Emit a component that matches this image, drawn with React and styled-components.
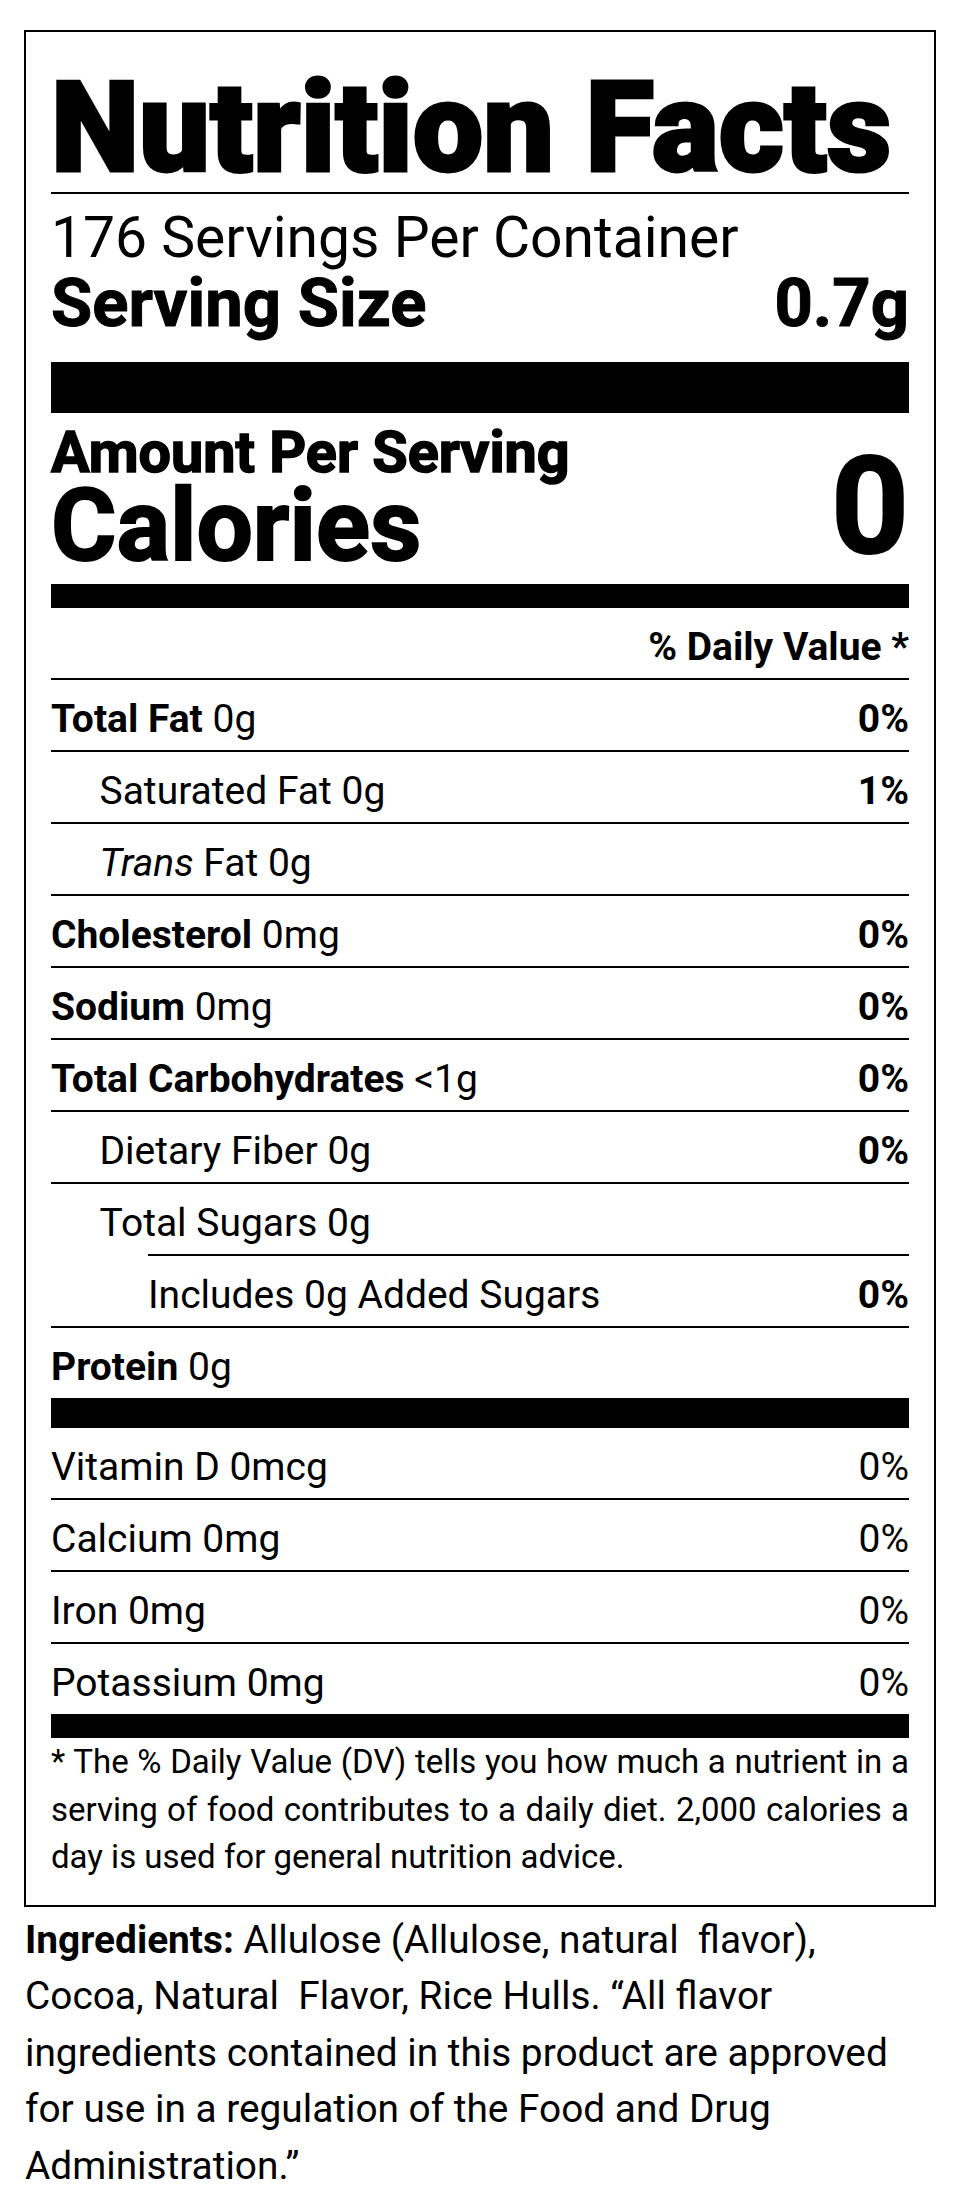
import React from 'react';
import styled, { createGlobalStyle } from 'styled-components';

const Global = createGlobalStyle`
  html, body { margin: 0; padding: 0; background: #fff; }
  body {
    font-family: Roboto, "Liberation Sans", Arial, sans-serif;
    color: #000;
    -webkit-font-smoothing: antialiased;
  }
`;

const Page = styled.main`
  width: 960px;
  box-sizing: border-box;
  padding: 30px 24px 20px;
`;

const Panel = styled.section`
  border: 2px solid #000;
  padding: 25px 25px 24px;
`;

const Title = styled.h1`
  margin: 8px 0 0;
  font-size: 125.5px;
  font-weight: 900;
  line-height: 127px;
  -webkit-text-stroke: 3px #000;
  border-bottom: 2px solid #000;
  white-space: nowrap;
`;

const Servings = styled.div`
  margin-top: 12px;
  font-size: 57px;
  line-height: 64px;
  font-weight: 400;
`;

const SizeRow = styled.div`
  display: flex;
  justify-content: space-between;
  font-size: 67px;
  line-height: 67px;
  font-weight: 700;
  -webkit-text-stroke: 1px #000;
  margin-bottom: 25px;
`;

const Bar = styled.div`
  height: ${(p) => p.$h}px;
  background: #000;
`;

const CalorieBlock = styled.div`
  display: flex;
  justify-content: space-between;
  align-items: flex-end;
  padding-top: 12px;
  margin-bottom: 14px;
`;

const CalorieLabels = styled.div`
  display: flex;
  flex-direction: column;
`;

const AmountLabel = styled.div`
  font-size: 57.5px;
  line-height: 56px;
  font-weight: 700;
  -webkit-text-stroke: 1.5px #000;
`;

const CaloriesLabel = styled.div`
  font-size: 100px;
  line-height: 89px;
  font-weight: 700;
  -webkit-text-stroke: 2px #000;
`;

const CaloriesValue = styled.div`
  font-size: 136px;
  line-height: 127px;
  font-weight: 700;
  -webkit-text-stroke: 2px #000;
`;

const Row = styled.div`
  display: flex;
  justify-content: ${(p) => (p.$end ? 'flex-end' : 'space-between')};
  align-items: baseline;
  padding: 17px 0 9px;
  font-size: 39px;
  line-height: 44px;
  border-bottom: ${(p) => (p.$noRule ? 'none' : '2px solid #000')};
`;

const Label = styled.span`
  padding-left: ${(p) => (p.$level || 0) * 48.5}px;
  white-space: nowrap;
`;

const Strong = styled.b`
  font-weight: 700;
`;

const Em = styled.i`
  font-style: italic;
`;

const Pct = styled.span`
  font-weight: ${(p) => (p.$light ? 400 : 700)};
`;

const Rule = styled.div`
  height: 2px;
  background: #000;
  margin-left: ${(p) => p.$inset || 0}px;
`;

const Footnote = styled.p`
  margin: 0;
  font-size: 33px;
  line-height: 47.5px;
  text-align: justify;
`;

const Ingredients = styled.p`
  margin: 5px 0 0 1px;
  font-size: 38.8px;
  line-height: 56.5px;
`;

const nutrients = [
  { bold: 'Total Fat', amt: '0g', pct: '0%' },
  { label: 'Saturated Fat 0g', level: 1, pct: '1%' },
  { trans: true, level: 1 },
  { bold: 'Cholesterol', amt: '0mg', pct: '0%' },
  { bold: 'Sodium', amt: '0mg', pct: '0%' },
  { bold: 'Total Carbohydrates', amt: '<1g', pct: '0%' },
  { label: 'Dietary Fiber 0g', level: 1, pct: '0%' },
];

const vitamins = [
  { label: 'Vitamin D 0mcg', pct: '0%' },
  { label: 'Calcium 0mg', pct: '0%' },
  { label: 'Iron 0mg', pct: '0%' },
  { label: 'Potassium 0mg', pct: '0%', last: true },
];

function NutrientLabel({ n }) {
  if (n.trans) {
    return (
      <Label $level={n.level}>
        <Em>Trans</Em> Fat 0g
      </Label>
    );
  }
  if (n.bold) {
    return (
      <Label $level={n.level}>
        <Strong>{n.bold}</Strong> {n.amt}
      </Label>
    );
  }
  return <Label $level={n.level}>{n.label}</Label>;
}

export default function App() {
  return (
    <>
      <Global />
      <Page>
        <Panel>
          <Title>Nutrition Facts</Title>
          <Servings>176 Servings Per Container</Servings>
          <SizeRow>
            <span>Serving Size</span>
            <span>0.7g</span>
          </SizeRow>
          <Bar $h={51} />
          <CalorieBlock>
            <CalorieLabels>
              <AmountLabel>Amount Per Serving</AmountLabel>
              <CaloriesLabel>Calories</CaloriesLabel>
            </CalorieLabels>
            <CaloriesValue>0</CaloriesValue>
          </CalorieBlock>
          <Bar $h={24} />
          <Row $end>
            <Pct>% Daily Value *</Pct>
          </Row>
          {nutrients.map((n, i) => (
            <Row key={i}>
              <NutrientLabel n={n} />
              {n.pct && <Pct>{n.pct}</Pct>}
            </Row>
          ))}
          <Row $noRule>
            <Label $level={1}>Total Sugars 0g</Label>
          </Row>
          <Rule $inset={97} />
          <Row>
            <Label $level={2}>Includes 0g Added Sugars</Label>
            <Pct>0%</Pct>
          </Row>
          <Row $noRule>
            <Label>
              <Strong>Protein</Strong> 0g
            </Label>
          </Row>
          <Bar $h={30} />
          {vitamins.map((v) => (
            <Row key={v.label} $noRule={v.last}>
              <Label>{v.label}</Label>
              <Pct $light>{v.pct}</Pct>
            </Row>
          ))}
          <Bar $h={24} />
          <Footnote>
            * The % Daily Value (DV) tells you how much a nutrient in a serving of food
            contributes to a daily diet. 2,000 calories a day is used for general nutrition
            advice.
          </Footnote>
        </Panel>
        <Ingredients>
          <Strong>Ingredients:</Strong> Allulose (Allulose, natural{'\u00A0'} flavor), Cocoa,
          Natural{'\u00A0'} Flavor, Rice Hulls. “All flavor ingredients contained in this
          product are approved for use in a regulation of the Food and Drug Administration.”
        </Ingredients>
      </Page>
    </>
  );
}
